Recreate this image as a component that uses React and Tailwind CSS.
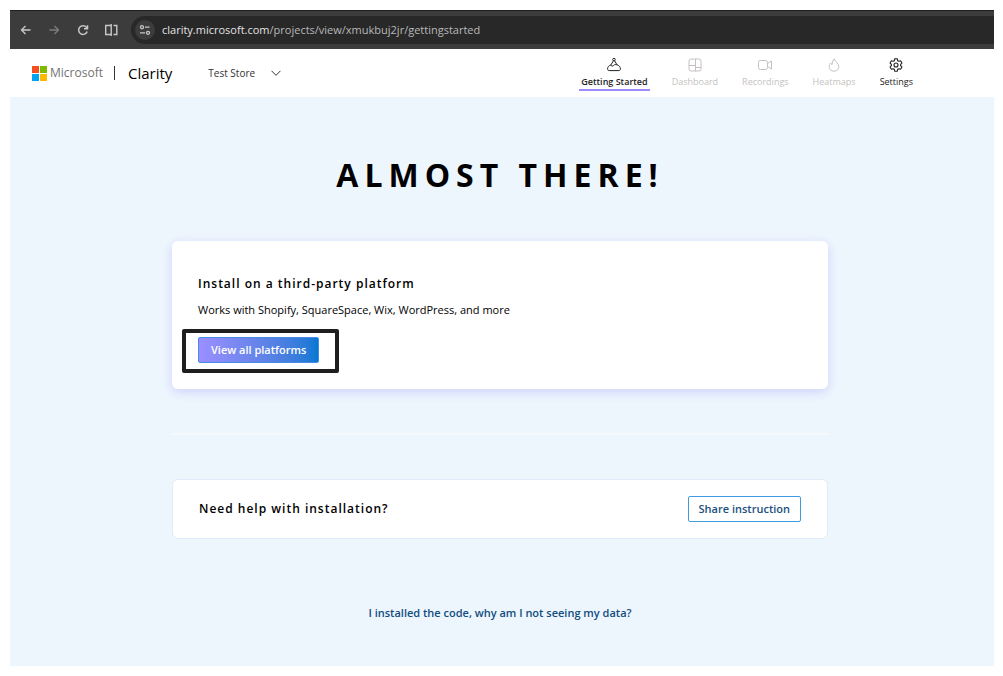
import React from 'react';
import clsx from 'clsx';

const uiFont = "font-['Open_Sans','Noto_Sans',sans-serif]";

const GettingStartedIcon = () => (
  <svg viewBox="0 0 16 16" className="w-4 h-4" fill="none" stroke="currentColor" strokeWidth="1" strokeLinejoin="round">
    <circle cx="8" cy="2.6" r="1.3" />
    <path d="M7.4 3.8 L5 7.8 M8.6 3.8 L11 7.8" />
    <path d="M5 7.8 C2.8 8.6 1.6 10 1.6 11.8 C1.6 13.1 2.2 13.6 3.2 13.6 H12.8 C13.8 13.6 14.4 13.1 14.4 11.8 C14.4 10 13.2 8.6 11 7.8" />
    <path d="M5 7.8 C5.2 9.4 6.6 9.6 7.6 8.4 C8.6 7.4 9.8 7.4 11 7.8" />
  </svg>
);

const DashboardIcon = () => (
  <svg viewBox="0 0 16 16" className="w-4 h-4" fill="none" stroke="currentColor" strokeWidth="1">
    <rect x="2" y="2" width="12" height="12" rx="2" />
    <path d="M8.5 2 V14 M2 8.5 H8.5 M8.5 10.5 H14" />
  </svg>
);

const RecordingsIcon = () => (
  <svg viewBox="0 0 16 16" className="w-4 h-4" fill="none" stroke="currentColor" strokeWidth="1" strokeLinejoin="round">
    <rect x="1.5" y="3.5" width="9" height="9" rx="2" />
    <path d="M10.5 6.5 L14.5 4 V12 L10.5 9.5" />
  </svg>
);

const HeatmapsIcon = () => (
  <svg viewBox="0 0 16 16" className="w-4 h-4" fill="none" stroke="currentColor" strokeWidth="1" strokeLinejoin="round">
    <path d="M8.3 1.8 C8.6 4.6 12.8 6 12.8 9.8 C12.8 12.4 10.8 14.2 8 14.2 C5.2 14.2 3.2 12.4 3.2 9.7 C3.2 8 3.9 6.7 4.7 5.9 C5 7 5.4 7.5 6.1 7.6 C6.4 5.5 6.4 3.2 8.3 1.8 Z" />
  </svg>
);

const SettingsIcon = () => (
  <svg viewBox="0 0 16 16" className="w-4 h-4" fill="none" stroke="currentColor" strokeWidth="1.1" strokeLinejoin="round">
    <circle cx="8" cy="8" r="2" />
    <path d="M6.7 1.9 Q8 1.5 9.3 1.9 L9.7 3.7 L10.8 4.3 L12.6 3.8 Q13.6 4.8 13.9 6.1 L12.6 7.4 V8.6 L13.9 9.9 Q13.6 11.2 12.6 12.2 L10.8 11.7 L9.7 12.3 L9.3 14.1 Q8 14.5 6.7 14.1 L6.3 12.3 L5.2 11.7 L3.4 12.2 Q2.4 11.2 2.1 9.9 L3.4 8.6 V7.4 L2.1 6.1 Q2.4 4.8 3.4 3.8 L5.2 4.3 L6.3 3.7 Z" />
  </svg>
);

const navItems = [
  { id: 'getting-started', label: 'Getting Started', icon: GettingStartedIcon, state: 'active' },
  { id: 'dashboard', label: 'Dashboard', icon: DashboardIcon, state: 'disabled' },
  { id: 'recordings', label: 'Recordings', icon: RecordingsIcon, state: 'disabled' },
  { id: 'heatmaps', label: 'Heatmaps', icon: HeatmapsIcon, state: 'disabled' },
  { id: 'settings', label: 'Settings', icon: SettingsIcon, state: 'normal' }
];

function BrowserBar() {
  return (
    <div className="flex items-center h-[39px] pl-2 bg-[#3c3c3c] border-t border-[#1f1f1f] text-[#c7c7c7]">
      <button aria-label="Back" className="w-4 h-4">
        <svg viewBox="0 0 16 16" className="w-4 h-4" fill="none" stroke="currentColor" strokeWidth="1.4">
          <path d="M12.5 8 H3.5 M7.5 4 L3.5 8 L7.5 12" />
        </svg>
      </button>
      <button aria-label="Forward" className="w-4 h-4 ml-3 text-[#7c7c7c]">
        <svg viewBox="0 0 16 16" className="w-4 h-4" fill="none" stroke="currentColor" strokeWidth="1.4">
          <path d="M3.5 8 H12.5 M8.5 4 L12.5 8 L8.5 12" />
        </svg>
      </button>
      <button aria-label="Reload" className="w-4 h-4 ml-[13px]">
        <svg viewBox="0 0 16 16" className="w-4 h-4" fill="none" stroke="currentColor" strokeWidth="1.5">
          <path d="M12.2 9.5 A4.4 4.4 0 1 1 11.4 5.2 L12.3 6.2" />
          <path d="M12.5 3.2 V6.7 H9" />
        </svg>
      </button>
      <button aria-label="Split view" className="w-4 h-4 ml-3">
        <svg viewBox="0 0 16 16" className="w-4 h-4" fill="none" stroke="currentColor" strokeWidth="1.4">
          <path d="M8.2 3.5 H2.7 V12.5 H8.2 M10.5 3.5 H13.8 V12.5 H10.5 M8.2 2 V14" />
        </svg>
      </button>
      <div className="flex flex-1 items-center h-7 ml-3 pl-1 bg-[#282828] rounded-l-full">
        <span className="flex items-center justify-center w-5 h-5 rounded-full bg-[#3c3c3c]">
          <svg viewBox="0 0 14 14" className="w-3.5 h-3.5" fill="none" stroke="currentColor" strokeWidth="1.3">
            <circle cx="4" cy="4.2" r="1.5" />
            <path d="M7 4.2 H11.5 M2 9.8 H7" />
            <circle cx="10" cy="9.8" r="1.5" />
          </svg>
        </span>
        <p className="ml-[7px] text-[11px] text-[#b9b9b9]">
          <span className="text-[#e3e3e3]">clarity.microsoft.com</span>/projects/view/xmukbuj2jr/gettingstarted
        </p>
      </div>
    </div>
  );
}

function Header() {
  return (
    <header className="flex items-center justify-between h-12 pl-[22px] pr-[79px] bg-white">
      <div className="flex items-center">
        <svg viewBox="0 0 15 15" className="w-[15px] h-[15px]">
          <rect width="7" height="7" fill="#f25022" />
          <rect x="8" width="7" height="7" fill="#7fba00" />
          <rect y="8" width="7" height="7" fill="#00a4ef" />
          <rect x="8" y="8" width="7" height="7" fill="#ffb900" />
        </svg>
        <span className="ml-[3px] text-xs text-[#737373]">Microsoft</span>
        <span className="w-px h-3.5 ml-[11px] bg-[#333333]" />
        <span className="ml-[13px] text-[15px] text-black">Clarity</span>
        <button className="flex items-center gap-4 ml-9 text-[10px] text-[#333333]">
          Test Store
          <svg viewBox="0 0 10 10" className="w-2.5 h-2.5" fill="none" stroke="currentColor" strokeWidth="1">
            <path d="M0.5 2.8 L5 7.3 L9.5 2.8" />
          </svg>
        </button>
      </div>

      <nav className="flex self-end gap-5 mb-1.5">
        {navItems.map((item) => {
          const Icon = item.icon;
          return (
            <button
              key={item.id}
              disabled={item.state === 'disabled'}
              className={clsx(
                'flex flex-col items-center gap-0.5 px-0.5 text-[9px] leading-[14px] border-b-2',
                item.state === 'active' && 'font-semibold text-[#222222] border-[#9b8cff]',
                item.state === 'disabled' && 'text-[#c4c2c0] border-transparent',
                item.state === 'normal' && 'text-[#222222] border-transparent'
              )}
            >
              <Icon />
              {item.label}
            </button>
          );
        })}
      </nav>
    </header>
  );
}

export default function App() {
  return (
    <div className={`min-h-screen bg-white py-2.5 pl-2.5 pr-[9px] ${uiFont}`}>
      <BrowserBar />
      <Header />

      <main className="flex flex-col items-center bg-[#eef6fd] pt-14 pr-1 pb-[45px]">
        <h1 className="text-[32px] leading-11 font-bold tracking-[6px] text-black">ALMOST THERE!</h1>

        {/* Third-party install */}
        <section className="w-full max-w-[656px] mt-11 px-[26px] pt-[33px] pb-[26px] bg-white rounded-md shadow-[0_3px_12px_#cdd2fb]">
          <h2 className="text-xs leading-5 font-semibold tracking-[1px] text-black">Install on a third-party platform</h2>
          <p className="mt-2 text-[11px] leading-4 text-black">
            Works with Shopify, SquareSpace, Wix, WordPress, and more
          </p>
          <div className="relative w-fit mt-[19px]">
            <button className="block h-[26px] px-3 text-[11px] font-semibold text-white rounded-xs border border-[#4a8be8] bg-linear-to-r from-[#9b8fff] to-[#0078d4]">
              View all platforms
            </button>
            <span className="absolute -left-4 -right-5 -top-2 -bottom-2.5 border-4 border-[#1e1e1e] rounded-xs pointer-events-none" />
          </div>
        </section>

        <hr className="w-full max-w-[656px] mt-11 border-t-2 border-[#f5f9fb]" />

        {/* Help */}
        <section className="flex items-center justify-between w-full max-w-[656px] mt-11 px-[26px] py-4 bg-white rounded-md border border-[#e0ebfb]">
          <h2 className="text-xs leading-5 font-semibold tracking-[1px] text-black">Need help with installation?</h2>
          <button className="h-[26px] px-2.5 text-[11px] font-semibold text-[#1b4f7e] bg-white rounded-xs border border-[#3f9ae0]">
            Share instruction
          </button>
        </section>

        <a href="#help" className="mt-[66px] text-[11px] leading-4 font-semibold text-[#124d80]">
          I installed the code, why am I not seeing my data?
        </a>
      </main>
    </div>
  );
}
